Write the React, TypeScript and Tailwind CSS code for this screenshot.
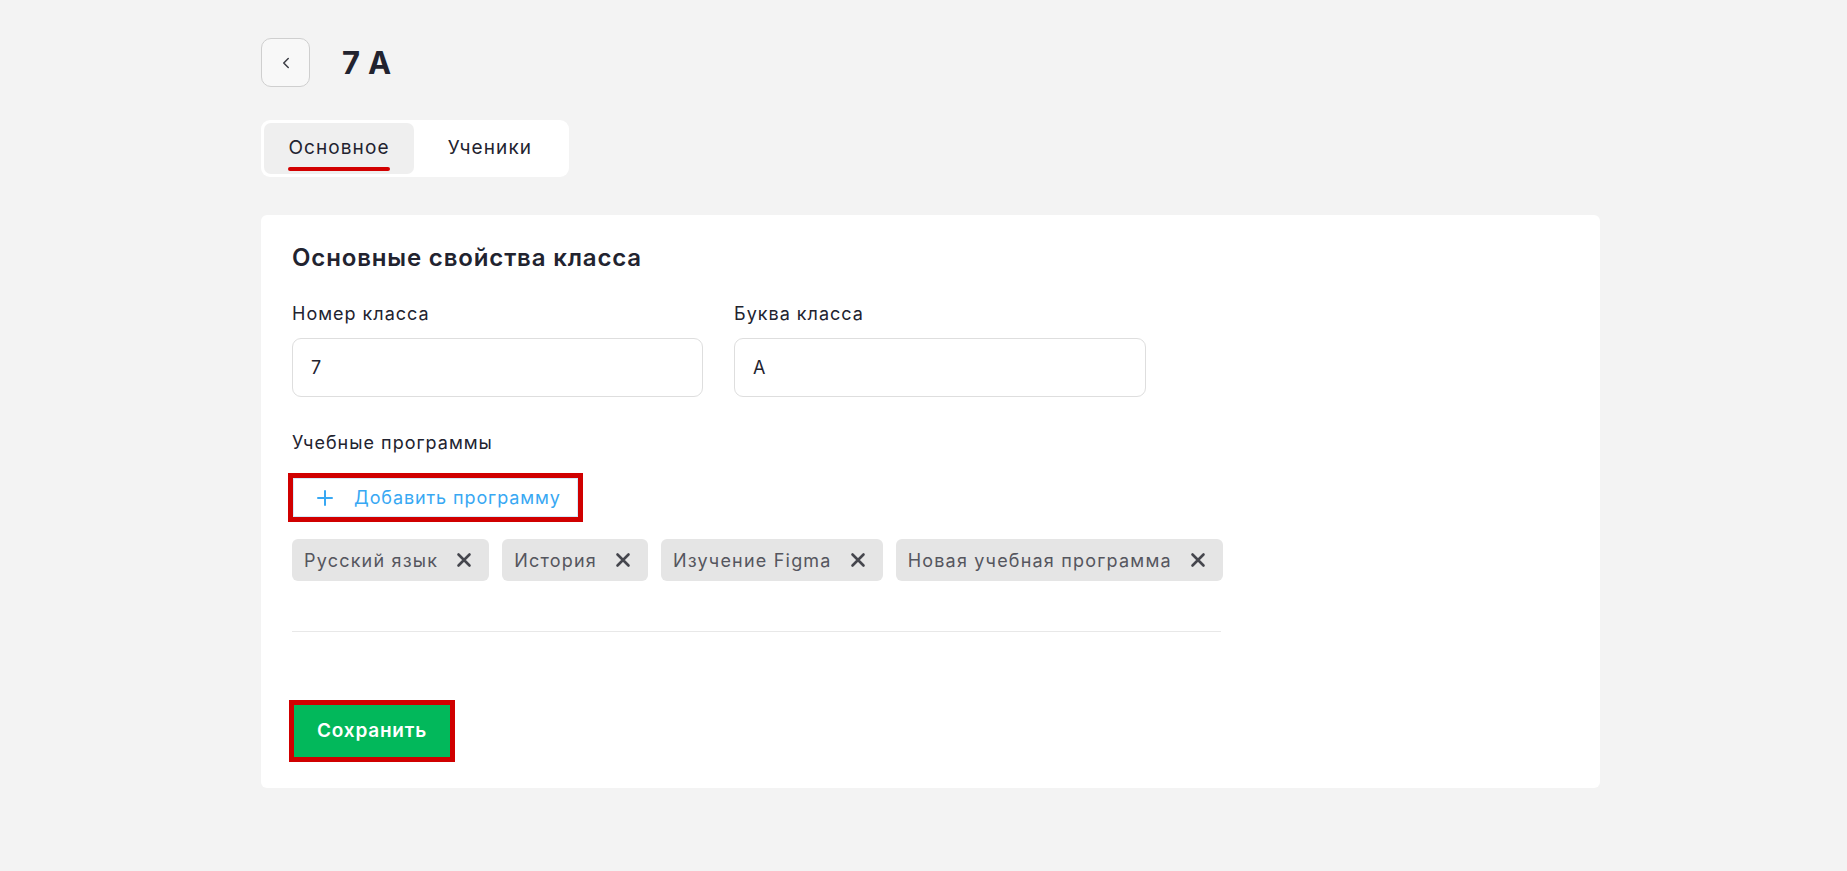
import React from 'react';
import { ChevronLeft, Plus } from 'lucide-react';

const programs = ['Русский язык', 'История', 'Изучение Figma', 'Новая учебная программа'];

const CloseIcon: React.FC = () => (
  <svg width="24" height="24" viewBox="0 0 24 24" fill="none">
    <path d="M6.5 6.5L17.5 17.5M17.5 6.5L6.5 17.5" stroke="#45464d" strokeWidth="2.6" strokeLinecap="round" />
  </svg>
);

const App: React.FC = () => {
  return (
    <div className="min-h-[871px] w-full bg-[#f3f3f3] font-['Inter',sans-serif] text-[#22232f]">
      <div className="pl-[261px] pt-[38px] w-[1600px]">
        {/* Header */}
        <div className="flex items-center gap-8">
          <button className="w-[49px] h-[49px] rounded-[10px] border border-[#cfcfcf] bg-[#f8f8f8] flex items-center justify-center text-[#3b3c44]">
            <ChevronLeft size={18} strokeWidth={2} />
          </button>
          <h1 className="text-[31px] font-bold leading-none tracking-[0.3px]">7 A</h1>
        </div>

        {/* Tabs */}
        <div className="mt-[33px] inline-flex p-[3px] bg-white rounded-[9px]">
          <div className="relative w-[150px] h-[51px] rounded-[7px] bg-[#efefef] flex items-center justify-center text-[19px]">
            <span className="relative tracking-[1.1px]">
              Основное
              <span className="absolute left-0 right-0 -bottom-[8px] h-[4px] rounded-full bg-[#d20000]" />
            </span>
          </div>
          <div className="w-[152px] h-[51px] flex items-center justify-center text-[19px] tracking-[1.1px]">
            Ученики
          </div>
        </div>

        {/* Card */}
        <div className="mt-[38px] bg-white rounded-[6px] pl-[31px] pt-[27px] pb-[26px]">
          <h2 className="text-[24px] leading-[32px] font-semibold tracking-[0.85px]">Основные свойства класса</h2>

          <div className="mt-7 flex gap-[31px] tracking-[1px]">
            <div className="w-[411px]">
              <div className="text-[18px] leading-[24px]">Номер класса</div>
              <div className="mt-3 h-[59px] rounded-[9px] border border-[#dedede] px-[18px] flex items-center text-[18px]">7</div>
            </div>
            <div className="w-[412px]">
              <div className="text-[18px] leading-[24px]">Буква класса</div>
              <div className="mt-3 h-[59px] rounded-[9px] border border-[#dedede] px-[18px] flex items-center text-[18px]">A</div>
            </div>
          </div>

          <div className="mt-[34px] text-[18px] leading-[24px] tracking-[1px]">Учебные программы</div>

          <div className="mt-[18px] -ml-[4px] inline-flex border-[5px] border-[#d00000]">
            <button className="h-[39px] pl-[19px] pr-[16px] flex items-center gap-[17px] bg-white border border-[#d5ebfb] text-[#38a8f3] text-[18px]">
              <Plus size={24} strokeWidth={2} />
              <span className="tracking-[0.9px]">Добавить программу</span>
            </button>
          </div>

          <div className="mt-[17px] flex gap-[13px]">
            {programs.map((p) => (
              <div key={p} className="shrink-0 whitespace-nowrap h-[42px] rounded-[6px] bg-[#e5e5e5] pl-3 pr-[13px] flex items-center gap-[14px] text-[18px] text-[#55565e]">
                <span className="tracking-[1.2px]">{p}</span>
                <CloseIcon />
              </div>
            ))}
          </div>

          <div className="mt-[50px] w-[929px] h-px bg-[#e8e8e8]" />

          <div className="mt-[68px] -ml-[3px] inline-flex border-[5px] border-[#d00000]">
            <button className="h-[52px] px-[23px] bg-[#02b85b] text-white text-[19px] font-semibold tracking-[0.8px]">
              Сохранить
            </button>
          </div>
        </div>
      </div>
    </div>
  );
};

export default App;
